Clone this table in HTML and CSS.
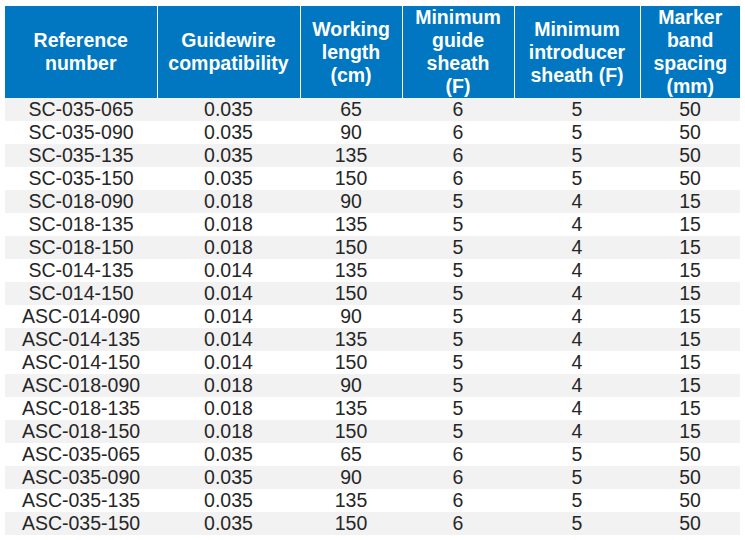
FILE: index.html
```html
<!DOCTYPE html>
<html>
<head>
<meta charset="utf-8">
<link rel="stylesheet" href="styles.css">
</head>
<body>
<table class="spec">
  <colgroup>
    <col class="c1"><col class="c2"><col class="c3"><col class="c4"><col class="c5"><col class="c6">
  </colgroup>
  <thead>
    <tr>
      <th>Reference<br>number</th>
      <th>Guidewire<br>compatibility</th>
      <th>Working<br>length<br>(cm)</th>
      <th>Minimum<br>guide<br>sheath<br>(F)</th>
      <th>Minimum<br>introducer<br>sheath (F)</th>
      <th>Marker<br>band<br>spacing<br>(mm)</th>
    </tr>
  </thead>
  <tbody>
    <tr><td>SC-035-065</td><td>0.035</td><td>65</td><td>6</td><td>5</td><td>50</td></tr>
    <tr><td>SC-035-090</td><td>0.035</td><td>90</td><td>6</td><td>5</td><td>50</td></tr>
    <tr><td>SC-035-135</td><td>0.035</td><td>135</td><td>6</td><td>5</td><td>50</td></tr>
    <tr><td>SC-035-150</td><td>0.035</td><td>150</td><td>6</td><td>5</td><td>50</td></tr>
    <tr><td>SC-018-090</td><td>0.018</td><td>90</td><td>5</td><td>4</td><td>15</td></tr>
    <tr><td>SC-018-135</td><td>0.018</td><td>135</td><td>5</td><td>4</td><td>15</td></tr>
    <tr><td>SC-018-150</td><td>0.018</td><td>150</td><td>5</td><td>4</td><td>15</td></tr>
    <tr><td>SC-014-135</td><td>0.014</td><td>135</td><td>5</td><td>4</td><td>15</td></tr>
    <tr><td>SC-014-150</td><td>0.014</td><td>150</td><td>5</td><td>4</td><td>15</td></tr>
    <tr><td>ASC-014-090</td><td>0.014</td><td>90</td><td>5</td><td>4</td><td>15</td></tr>
    <tr><td>ASC-014-135</td><td>0.014</td><td>135</td><td>5</td><td>4</td><td>15</td></tr>
    <tr><td>ASC-014-150</td><td>0.014</td><td>150</td><td>5</td><td>4</td><td>15</td></tr>
    <tr><td>ASC-018-090</td><td>0.018</td><td>90</td><td>5</td><td>4</td><td>15</td></tr>
    <tr><td>ASC-018-135</td><td>0.018</td><td>135</td><td>5</td><td>4</td><td>15</td></tr>
    <tr><td>ASC-018-150</td><td>0.018</td><td>150</td><td>5</td><td>4</td><td>15</td></tr>
    <tr><td>ASC-035-065</td><td>0.035</td><td>65</td><td>6</td><td>5</td><td>50</td></tr>
    <tr><td>ASC-035-090</td><td>0.035</td><td>90</td><td>6</td><td>5</td><td>50</td></tr>
    <tr><td>ASC-035-135</td><td>0.035</td><td>135</td><td>6</td><td>5</td><td>50</td></tr>
    <tr><td>ASC-035-150</td><td>0.035</td><td>150</td><td>6</td><td>5</td><td>50</td></tr>
  </tbody>
</table>
</body>
</html>
```
FILE: styles.css
```css
html, body {
  margin: 0;
  padding: 0;
  background: #ffffff;
}

body {
  padding: 6px 5px 0 5px;
  font-family: "Liberation Sans", Arial, sans-serif;
}

.spec {
  border-collapse: collapse;
  table-layout: fixed;
  width: 735px;
}

.c1 { width: 152px; }
.c2 { width: 143px; }
.c3 { width: 102px; }
.c4 { width: 112px; }
.c5 { width: 126px; }
.c6 { width: 100px; }

.spec th {
  background: #0077c0;
  color: #ffffff;
  font-weight: bold;
  font-size: 19.5px;
  line-height: 23px;
  height: 92px;
  padding: 0;
  text-align: center;
  vertical-align: middle;
  border-left: 1px solid #ffffff;
  box-sizing: border-box;
}

.spec th:first-child {
  border-left: none;
}

.spec td {
  font-size: 19.5px;
  line-height: 23px;
  height: 23px;
  padding: 0;
  text-align: center;
  color: #262626;
  white-space: nowrap;
}

.spec tbody tr:nth-child(odd) td {
  background: #f2f2f2;
}
```
